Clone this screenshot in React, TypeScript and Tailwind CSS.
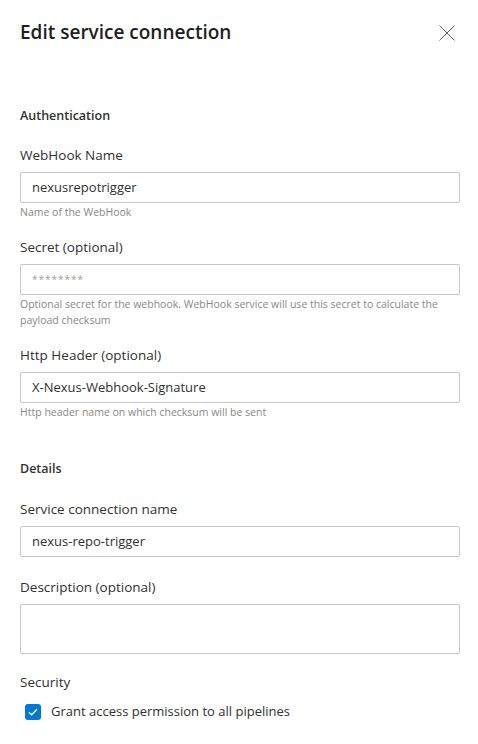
const font = { fontFamily: '"Segoe UI", "Open Sans", "Liberation Sans", sans-serif' };

function Field({ label, value, placeholder, help, tall, className = "" }: { label: string; value?: string; placeholder?: string; help?: string; tall?: boolean; className?: string }) {
  return (
    <div className={`flex flex-col ${className}`}>
      <div className="text-[13.5px] leading-[20px] text-[#323130]">{label}</div>
      <div
        className={`mt-[7px] flex items-center rounded-[2px] border border-[#c8c8c8] bg-white px-[11px] ${tall ? "h-[50px]" : "h-[31px]"}`}
      >
        {value && <span className="text-[13px] text-[#323130]">{value}</span>}
        {placeholder && <span className="text-[10px] tracking-[1px] text-[#a19f9d]">{placeholder}</span>}
      </div>
      {help && <div className="mt-[1px] pr-[12px] text-[10.5px] leading-[16px] text-[#8a8886]">{help}</div>}
    </div>
  );
}

export default function App() {
  return (
    <div className="min-h-[744px] w-[478px] bg-white" style={font}>
      <div className="flex items-center justify-between pl-[20px] pr-[20px] pt-[17px]">
        <h1 className="text-[19px] font-semibold leading-[30px] text-[#201f1e]">Edit service connection</h1>
        <svg width="16" height="16" viewBox="0 0 16 16" className="mr-[3px] mt-[2px]" aria-hidden>
          <path d="M0.5 0.5 L15.5 15.5 M15.5 0.5 L0.5 15.5" stroke="#605e5c" strokeWidth="1" fill="none" />
        </svg>
      </div>

      <div className="pl-[20px] pr-[18px] pt-[59px]">
        <div className="text-[12.5px] font-semibold leading-[20px] text-[#323130]">Authentication</div>

        <Field className="mt-[19px]" label="WebHook Name" value="nexusrepotrigger" help="Name of the WebHook" />
        <Field
          className="mt-[17px]"
          label="Secret (optional)"
          placeholder="********"
          help="Optional secret for the webhook. WebHook service will use this secret to calculate the payload checksum"
        />
        <Field className="mt-[17px]" label="Http Header (optional)" value="X-Nexus-Webhook-Signature" help="Http header name on which checksum will be sent" />

        <div className="mt-[39px] text-[12.5px] font-semibold leading-[20px] text-[#323130]">Details</div>

        <Field className="mt-[20px]" label="Service connection name" value="nexus-repo-trigger" />
        <Field className="mt-[20px]" label="Description (optional)" tall />

        <div className="mt-[18px] text-[13.5px] leading-[20px] text-[#323130]">Security</div>
        <label className="mt-[10px] flex items-center gap-[10px] pl-[5px]">
          <span className="flex h-[16px] w-[16px] items-center justify-center rounded-[3px] bg-[#0078d4]">
            <svg width="10" height="8" viewBox="0 0 10 8" aria-hidden>
              <path d="M1 4.2 L3.7 6.8 L9 1.2" stroke="white" strokeWidth="1.3" fill="none" />
            </svg>
          </span>
          <span className="text-[13px] text-[#323130]">Grant access permission to all pipelines</span>
        </label>
      </div>
    </div>
  );
}
